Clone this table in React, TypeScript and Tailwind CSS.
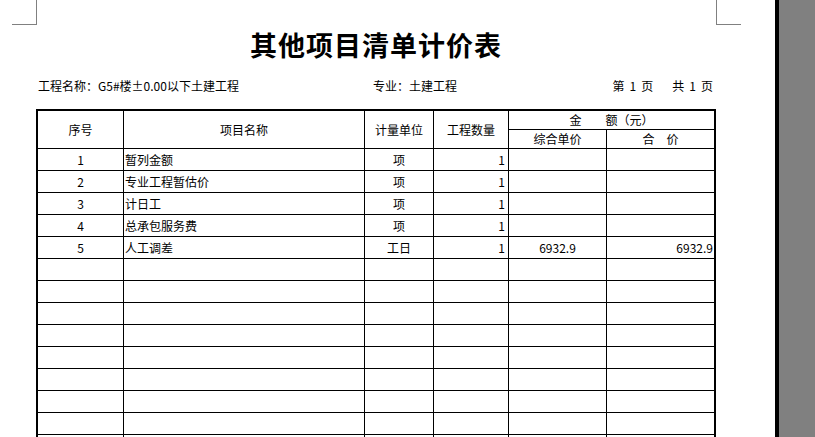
import React from "react";

const rows: { no: string; name: string; unit: string; qty: string; price: string; total: string }[] = [
  { no: "1", name: "暂列金额", unit: "项", qty: "1", price: "", total: "" },
  { no: "2", name: "专业工程暂估价", unit: "项", qty: "1", price: "", total: "" },
  { no: "3", name: "计日工", unit: "项", qty: "1", price: "", total: "" },
  { no: "4", name: "总承包服务费", unit: "项", qty: "1", price: "", total: "" },
  { no: "5", name: "人工调差", unit: "工日", qty: "1", price: "6932.9", total: "6932.9" },
];

const empty = Array.from({ length: 14 }, () => ({ no: "", name: "", unit: "", qty: "", price: "", total: "" }));

export default function App() {
  const all = [...rows, ...empty];
  return (
    <div className="flex h-[437px] w-[815px] overflow-hidden bg-white text-black font-['Noto_Sans_CJK_SC','Liberation_Sans',sans-serif]">
      <div className="w-[775px] shrink-0 bg-white flex flex-col">
        {/* crop marks */}
        <div className="flex h-[25px] shrink-0">
          <div className="ml-[12px] w-[25px] h-[25px] border-r border-b border-[#808080]" />
          <div className="ml-[679px] w-[25px] h-[25px] border-l border-b border-[#808080]" />
        </div>
        {/* title */}
        <div className="mt-[5px] ml-[36px] w-[680px] h-[30px] leading-[30px] text-center text-[27px] font-bold tracking-[1px]">
          其他项目清单计价表
        </div>
        {/* info row */}
        <div className="mt-[18px] ml-[36px] w-[680px] h-[16px] leading-[16px] text-[12px] flex">
          <span className="pl-[2px] w-[337px] shrink-0">工程名称：G5#楼±0.00以下土建工程</span>
          <span>专业：土建工程</span>
          <div className="ml-auto pr-[3px] flex gap-[19px]">
            <div className="flex gap-[5px]">
              <span>第</span>
              <span>1</span>
              <span>页</span>
            </div>
            <div className="flex gap-[5px]">
              <span>共</span>
              <span>1</span>
              <span>页</span>
            </div>
          </div>
        </div>
        {/* table */}
        <div className="mt-[15px] ml-[36px] w-[680px] border-2 border-black text-[12px] leading-[14px]">
          <div className="grid grid-cols-[86px_241px_69px_75px_98px_107px] grid-rows-[19px_19px]">
            <div className="row-span-2 border-r border-b border-black flex items-center justify-center">序号</div>
            <div className="row-span-2 border-r border-b border-black flex items-center justify-center">项目名称</div>
            <div className="row-span-2 border-r border-b border-black flex items-center justify-center">计量单位</div>
            <div className="row-span-2 border-r border-b border-black flex items-center justify-center">工程数量</div>
            <div className="col-span-2 border-b border-black flex items-center justify-center whitespace-pre">金　　额（元）</div>
            <div className="border-r border-b border-black flex items-center justify-center">综合单价</div>
            <div className="border-b border-black flex items-center justify-center whitespace-pre">合　价</div>
          </div>
          {all.map((r, i) => (
            <div key={i} className="grid grid-cols-[86px_241px_69px_75px_98px_107px] h-[22px]">
              <div className="border-r border-b border-black flex items-center justify-center">{r.no}</div>
              <div className="border-r border-b border-black flex items-center pl-[1px]">{r.name}</div>
              <div className="border-r border-b border-black flex items-center justify-center">{r.unit}</div>
              <div className="border-r border-b border-black flex items-center justify-end pr-[3px]">{r.qty}</div>
              <div className="border-r border-b border-black flex items-center justify-center">{r.price}</div>
              <div className="border-b border-black flex items-center justify-end pr-[1px]">{r.total}</div>
            </div>
          ))}
        </div>
      </div>
      <div className="w-[4px] shrink-0 bg-black" />
      <div className="flex-1 bg-[#808080]" />
    </div>
  );
}
